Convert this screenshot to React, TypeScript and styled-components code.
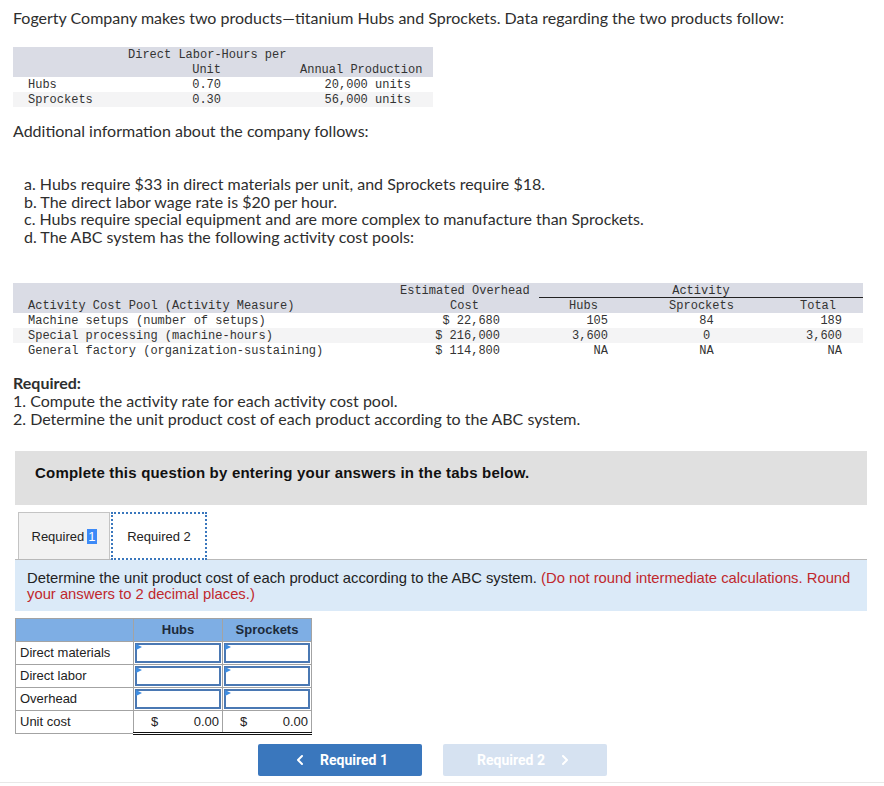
import React from 'react'
import styled, { createGlobalStyle } from 'styled-components'
import { ChevronLeft, ChevronRight } from 'lucide-react'

const SANS = `Lato, "Liberation Sans", Arial, sans-serif`
const MONO = `"Liberation Mono", "DejaVu Sans Mono", monospace`
const ARIAL = `"Liberation Sans", Arial, sans-serif`

const GlobalStyle = createGlobalStyle`
  body {
    margin: 0;
    background: #fff;
  }
`

const Page = styled.div`
  width: 884px;
  font-family: ${SANS};
  font-size: 16px;
  color: #2e2e2e;
`

const Content = styled.div`
  padding: 9px 17px 0 13px;
`

const Para = styled.p<{ $top?: number }>`
  margin: ${(p) => p.$top ?? 0}px 0 0;
  line-height: 18px;
  white-space: nowrap;
`

const List = styled.div`
  margin: 35px 0 0 11px;
  line-height: 17.7px;
`

const Required = styled.div`
  margin-top: 16px;
  line-height: 18px;

  b {
    font-weight: 700;
  }
`

const Grid = styled.div<{ $cols: string; $width: number; $top: number }>`
  margin-top: ${(p) => p.$top}px;
  width: ${(p) => p.$width}px;
  font-family: ${MONO};
  font-size: 12px;
  line-height: 15px;
  color: #333;

  & > div {
    display: grid;
    grid-template-columns: ${(p) => p.$cols};
  }
`

const Row = styled.div<{ $tone?: 'head' | 'alt' }>`
  background: ${(p) => (p.$tone === 'head' ? '#dadce5' : p.$tone === 'alt' ? '#f4f4f5' : 'transparent')};
`

const Cell = styled.div<{ $align?: 'left' | 'right' | 'center'; $pl?: number; $pr?: number; $span?: number; $rule?: boolean }>`
  text-align: ${(p) => p.$align ?? 'left'};
  padding: 1px ${(p) => p.$pr ?? 0}px 0 ${(p) => p.$pl ?? 0}px;
  white-space: pre;
  grid-column: ${(p) => (p.$span ? `span ${p.$span}` : 'auto')};
  border-bottom: ${(p) => (p.$rule ? '1px solid #222' : 'none')};
  height: 15px;
  box-sizing: border-box;
`

const Notice = styled.div`
  margin: 23px 0 0 2px;
  background: #e0e0e0;
  height: 54px;
  box-sizing: border-box;
  padding: 13px 20px 0;
  font-family: ${ARIAL};
  font-weight: 700;
  font-size: 15px;
  letter-spacing: 0.2px;
  line-height: 18px;
  color: #111;
`

const Tabs = styled.div`
  margin: 7px 0 0 2px;
  padding-left: 3px;
  display: flex;
  height: 48px;
  border-bottom: 1px solid #b9b9b9;
  box-sizing: border-box;
`

const Tab = styled.div<{ $active?: boolean }>`
  width: ${(p) => (p.$active ? 96 : 92)}px;
  height: ${(p) => (p.$active ? 48 : 47)}px;
  box-sizing: border-box;
  display: flex;
  align-items: center;
  justify-content: center;
  padding-top: 1px;
  font-family: ${ARIAL};
  font-size: 13px;
  color: #222;
  background: ${(p) => (p.$active ? '#fff' : '#f2f2f2')};
  border: ${(p) => (p.$active ? '2px dotted #3a77bd' : '1px solid #c4c4c4')};
  border-bottom: ${(p) => (p.$active ? '2px dotted #3a77bd' : 'none')};
  margin-left: ${(p) => (p.$active ? 1 : 0)}px;
`

const Mark = styled.span`
  background: #3d8af7;
  color: #fff;
  margin-left: 3px;
  padding: 0 1px;
`

const Instruction = styled.div`
  margin-left: 2px;
  background: #dbeaf8;
  padding: 10px 4px 9px 12px;
  font-family: ${ARIAL};
  font-size: 14.8px;
  line-height: 16px;
  color: #222;

  span {
    color: #c0282d;
  }
`

const Answer = styled.table`
  margin: 7px 0 0 2px;
  border-collapse: collapse;
  font-family: ${ARIAL};
  font-size: 13px;
  color: #222;

  th,
  td {
    border: 1px solid #a3a3a3;
    height: 23px;
    padding: 0;
    box-sizing: border-box;
  }

  th {
    background: #7eaee4;
    font-weight: 700;
    text-align: center;
    color: #1c2a3a;
  }
`

const Label = styled.td`
  width: 118px;
  padding-left: 4px !important;
  text-align: left;
`

const InputCell = styled.td`
  width: 89px;
  position: relative;

  &::before {
    content: '';
    position: absolute;
    inset: 1px;
    border: 2px solid #4a78b3;
  }

  &::after {
    content: '';
    position: absolute;
    left: 2px;
    top: 2px;
    border-left: 6px solid #3f8de0;
    border-top: 3px solid transparent;
    border-bottom: 3px solid transparent;
  }
`

const TotalCell = styled.td`
  width: 89px;
  border-bottom: 3px double #111 !important;

  div {
    display: flex;
    justify-content: space-between;
    padding: 0 3px 0 17px;
  }
`

const Nav = styled.div`
  margin: 9px 0 0 245px;
  display: flex;
  gap: 21px;
`

const NavButton = styled.div<{ $disabled?: boolean }>`
  width: 164px;
  height: 32px;
  border-radius: 2px;
  display: flex;
  align-items: center;
  justify-content: center;
  gap: 12px;
  font-family: Roboto, ${ARIAL};
  font-weight: 700;
  font-size: 14px;
  color: #fff;
  background: ${(p) => (p.$disabled ? '#d6e2f1' : '#3a77bd')};
`

const Footer = styled.div`
  margin-top: 6px;
  border-top: 1px solid #e8e8e8;
  height: 3px;
`

const App: React.FC = () => {
  return (
    <Page>
      <GlobalStyle />
      <Content>
        <Para>
          Fogerty Company makes two products—titanium Hubs and Sprockets. Data regarding the two products follow:
        </Para>

        <Grid $cols="115px 93px 212px" $width={420} $top={20}>
          <Row $tone="head">
            <Cell />
            <Cell>Direct Labor-Hours per</Cell>
            <Cell />
          </Row>
          <Row $tone="head">
            <Cell />
            <Cell $align="right">Unit</Cell>
            <Cell $pl={79}>Annual Production</Cell>
          </Row>
          <Row>
            <Cell $pl={15}>Hubs</Cell>
            <Cell $align="right">0.70</Cell>
            <Cell $align="right" $pr={22}>20,000 units</Cell>
          </Row>
          <Row $tone="alt">
            <Cell $pl={15}>Sprockets</Cell>
            <Cell $align="right">0.30</Cell>
            <Cell $align="right" $pr={22}>56,000 units</Cell>
          </Row>
        </Grid>

        <Para $top={15}>Additional information about the company follows:</Para>

        <List>
          <div>a. Hubs require $33 in direct materials per unit, and Sprockets require $18.</div>
          <div>b. The direct labor wage rate is $20 per hour.</div>
          <div>c. Hubs require special equipment and are more complex to manufacture than Sprockets.</div>
          <div>d. The ABC system has the following activity cost pools:</div>
        </List>

        <Grid $cols="387px 129px 10px 89px 147px 88px" $width={850} $top={37}>
          <Row $tone="head">
            <Cell />
            <Cell $align="center">Estimated Overhead</Cell>
            <Cell />
            <Cell $span={3} $align="center" $rule>
              Activity
            </Cell>
          </Row>
          <Row $tone="head">
            <Cell $pl={15}>Activity Cost Pool (Activity Measure)</Cell>
            <Cell $align="center">Cost</Cell>
            <Cell />
            <Cell $align="center">Hubs</Cell>
            <Cell $align="center">Sprockets</Cell>
            <Cell $align="right" $pr={27}>Total</Cell>
          </Row>
          <Row>
            <Cell $pl={15}>Machine setups (number of setups)</Cell>
            <Cell $align="right" $pr={29}>$ 22,680</Cell>
            <Cell />
            <Cell $align="right" $pr={20}>105</Cell>
            <Cell $align="center" $pl={10}>84</Cell>
            <Cell $align="right" $pr={21}>189</Cell>
          </Row>
          <Row $tone="alt">
            <Cell $pl={15}>Special processing (machine-hours)</Cell>
            <Cell $align="right" $pr={29}>$ 216,000</Cell>
            <Cell />
            <Cell $align="right" $pr={20}>3,600</Cell>
            <Cell $align="center" $pl={10}>0</Cell>
            <Cell $align="right" $pr={21}>3,600</Cell>
          </Row>
          <Row>
            <Cell $pl={15}>General factory (organization-sustaining)</Cell>
            <Cell $align="right" $pr={29}>$ 114,800</Cell>
            <Cell />
            <Cell $align="right" $pr={20}>NA</Cell>
            <Cell $align="center" $pl={10}>NA</Cell>
            <Cell $align="right" $pr={21}>NA</Cell>
          </Row>
        </Grid>

        <Required>
          <b>Required:</b>
          <div>1. Compute the activity rate for each activity cost pool.</div>
          <div>2. Determine the unit product cost of each product according to the ABC system.</div>
        </Required>

        <Notice>Complete this question by entering your answers in the tabs below.</Notice>

        <Tabs>
          <Tab>
            Required<Mark>1</Mark>
          </Tab>
          <Tab $active>Required 2</Tab>
        </Tabs>

        <Instruction>
          Determine the unit product cost of each product according to the ABC system.{' '}
          <span>(Do not round intermediate calculations. Round your answers to 2 decimal places.)</span>
        </Instruction>

        <Answer>
          <thead>
            <tr>
              <th style={{ width: 118 }} />
              <th>Hubs</th>
              <th>Sprockets</th>
            </tr>
          </thead>
          <tbody>
            {['Direct materials', 'Direct labor', 'Overhead'].map((label) => (
              <tr key={label}>
                <Label>{label}</Label>
                <InputCell />
                <InputCell />
              </tr>
            ))}
            <tr>
              <Label>Unit cost</Label>
              <TotalCell>
                <div>
                  <span>$</span>
                  <span>0.00</span>
                </div>
              </TotalCell>
              <TotalCell>
                <div>
                  <span>$</span>
                  <span>0.00</span>
                </div>
              </TotalCell>
            </tr>
          </tbody>
        </Answer>

        <Nav>
          <NavButton>
            <ChevronLeft size={16} strokeWidth={3} />
            Required 1
          </NavButton>
          <NavButton $disabled>
            Required 2
            <ChevronRight size={16} strokeWidth={3} />
          </NavButton>
        </Nav>
      </Content>
      <Footer />
    </Page>
  )
}

export default App
